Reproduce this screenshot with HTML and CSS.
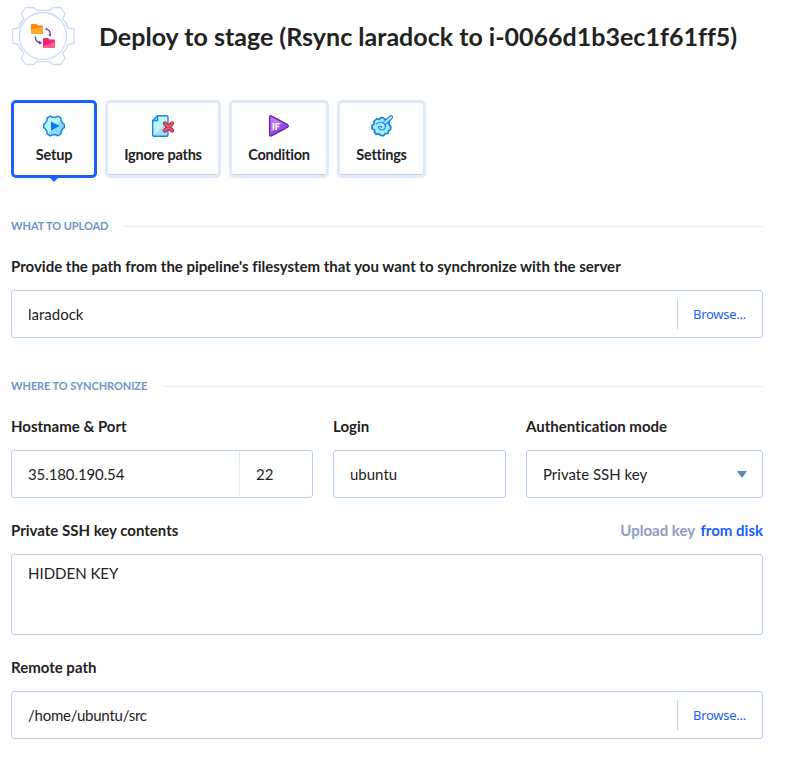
FILE: index.html
```html
<!DOCTYPE html>
<html lang="en">
<head>
<meta charset="utf-8">
<title>Deploy to stage</title>
<link rel="stylesheet" href="styles.css">
</head>
<body>
<main class="page">
  <header class="header">
    <svg class="header-icon" width="64" height="60" viewBox="11 6 64 60" fill="none">
      <path d="M25.5 7.5 33.5 7.5 37 10.5H50L53 7.5 61 7.5 65 14 62.5 19Q66.5 22.500 68 28L74 29V43L68 44.500Q66.500 49.500 62.500 53L65 58 61 64.500 53 64.500 50 61.500H37L33.500 64.500 25.500 64.500 21.500 58 24 53Q20 49.500 18.500 44.500L12.500 43V29L18.500 28Q20 22.500 24 19L21.500 14Z" stroke="#cbdcf7" stroke-width="1.300" stroke-linejoin="round"/>
      <circle cx="43" cy="36" r="23.500" stroke="#c8daf7" stroke-width="1.300"/>
      <path d="M31 25q0-1 1-1h4.500l1.500 1.500H42q1 0 1 1V33q0 1-1 1H32q-1 0-1-1Z" fill="#ff8500"/>
      <path d="M31 29.500 43 26.800V33q0 1-1 1H32q-1 0-1-1Z" fill="#ffab2e"/>
      <path d="M43 39q0-1 1-1h4l1.500 1.500H54q1 0 1 1V47q0 1-1 1H44q-1 0-1-1Z" fill="#fa246d"/>
      <path d="M43 46.500 55 41.500V47q0 1-1 1H44q-1 0-1-1Z" fill="#ff6091"/>
      <path d="M45.500 29.300q5 0 5 6M50.500 36l-1.700-1.500M45.500 29.300l1.600-1M35.500 36.500q-.5 5.500 5 6.300M39 41.200l2 1.600-2 1M35.500 36.500l-.7 1" stroke="#6939b7" stroke-width="1.300"/>
    </svg>
    <h1 class="title">Deploy to stage (Rsync laradock to i-0066d1b3ec1f61ff5)</h1>
  </header>

  <nav class="tabs">
    <a class="tab tab-setup active">
      <svg class="tab-icon" viewBox="0 0 22 22" fill="none">
        <path d="M7.300 1.200 9 2.200H13L14.700 1.200 18 3.200V5.300L19.800 8.400 21.300 9.300V12.700L19.800 13.600 18 16.700V18.800L14.700 20.800 13 19.800H9L7.300 20.800 4 18.800V16.700L2.200 13.600 .7 12.700V9.300L2.200 8.400 4 5.300V3.200Z" fill="#b8f4ff"/>
        <path d="M18 5.300 19.800 8.400 20.500 10V12.500L18 17V18L14.700 20 13 19H9L7 20 5 18.500Z" fill="#8ed7ff"/>
        <path d="M7.300 1.200 9 2.200H13L14.700 1.200 18 3.200V5.300L19.800 8.400 21.300 9.300V12.700L19.800 13.600 18 16.700V18.800L14.700 20.800 13 19.800H9L7.300 20.800 4 18.800V16.700L2.200 13.600 .7 12.700V9.300L2.200 8.400 4 5.300V3.200Z" stroke="#1784e8" stroke-width="1.500" stroke-linejoin="round"/>
        <path d="M8 6.500 16.500 11 8 15.500Z" fill="#087aec"/>
      </svg>
      <span>Setup</span>
    </a>
    <a class="tab tab-ignore">
      <svg class="tab-icon" viewBox="0 0 22 22" fill="none">
        <path d="M5.500.8H14.500Q16 .8 16 2.300V19.700Q16 21.200 14.500 21.200H2Q.7 21.200 .7 19.700V5.500Z" fill="#bbf6ff"/>
        <path d="M16 6V20.500H2Z" fill="#a2dcff"/>
        <path d="M5.500.8H14.500Q16 .8 16 2.300V19.700Q16 21.200 14.500 21.200H2Q.7 21.200 .7 19.700V5.500ZM5.500 1V5.500H1" stroke="#1784e8" stroke-width="1.400" stroke-linejoin="round"/>
        <path d="m13 8.500 7 7M20 8.500 13 15.500" stroke="#b52f4a" stroke-width="4.200" stroke-linecap="round"/>
        <path d="m13 8.500 7 7M20 8.500 13 15.500" stroke="#f05870" stroke-width="2" stroke-linecap="round"/>
      </svg>
      <span>Ignore paths</span>
    </a>
    <a class="tab tab-condition">
      <svg class="tab-icon" viewBox="0 0 22 22" fill="none">
        <path d="M1.700 2Q1.700.3 3.500 1.200L19.500 9.700Q21 11 19.500 12.200L3.500 20.800Q1.700 21.500 1.700 20Z" fill="#bf77fa"/>
        <path d="M20 11 3 20.500V17L15 7.500Z" fill="#9b4ce3"/>
        <path d="M1.700 2Q1.700.3 3.500 1.200L19.500 9.700Q21 11 19.500 12.200L3.500 20.800Q1.700 21.500 1.700 20Z" stroke="#5b20a8" stroke-width="1.400" stroke-linejoin="round"/>
        <text class="icon-text" x="4" y="14.500">IF</text>
      </svg>
      <span>Condition</span>
    </a>
    <a class="tab tab-settings">
      <svg class="tab-icon" viewBox="0 0 22 22" fill="none">
        <path d="M6 3.500 8 4.500 10 2.500 12.500 3 14 4.500 16 4 18.300 7 18 9.500 19.800 11.500 19.500 14.500 17.500 16 17 18.500 14 18.700 12.500 20.700 9.500 20.500 8 18.800 5 19.300 3.500 17V15L1 13.500 1.200 10.300 3 9 2.800 6.500Z" fill="#a4e9ff" stroke="#1680e6" stroke-width="1.700" stroke-linejoin="round"/>
        <path d="M14 8 20 2.200" stroke="#1680e6" stroke-width="4.200" stroke-linecap="round"/>
        <path d="M11 10.500 20 2.200" stroke="#b7f0ff" stroke-width="2" stroke-linecap="round"/>
        <path d="M5 9.500Q7 6.500 11 7.500L14 9Q15.500 14 11.500 15Q7.500 15 7.500 11.500H10.500V13" stroke="#268fea" stroke-width="1.200"/>
      </svg>
      <span>Settings</span>
    </a>
  </nav>

  <h2 class="section"><span>WHAT TO UPLOAD</span></h2>
  <div class="label">Provide the path from the pipeline's filesystem that you want to synchronize with the server</div>
  <div class="input"><span class="value">laradock</span><a class="browse">Browse...</a></div>

  <h2 class="section"><span>WHERE TO SYNCHRONIZE</span></h2>
  <div class="columns">
    <div>
      <div class="label">Hostname &amp; Port</div>
      <div class="input"><span class="value host">35.180.190.54</span><span class="port">22</span></div>
    </div>
    <div>
      <div class="label">Login</div>
      <div class="input"><span class="value">ubuntu</span></div>
    </div>
    <div>
      <div class="label">Authentication mode</div>
      <div class="input"><span class="value">Private SSH key</span><i class="caret"></i></div>
    </div>
  </div>

  <div class="label spaced"><span>Private SSH key contents</span><span class="upload">Upload key <a>from disk</a></span></div>
  <div class="input key">HIDDEN KEY</div>

  <div class="label spaced">Remote path</div>
  <div class="input"><span class="value path">/home/ubuntu/src</span><a class="browse">Browse...</a></div>
</main>
</body>
</html>
```
FILE: styles.css
```css
* { box-sizing: border-box; }
body {
  margin: 0;
  background: #fff;
  color: #222;
  font: 15px/20px Lato, "Liberation Sans", sans-serif;
  font-variant-ligatures: none;
}
.page { width: 763px; padding: 6px 0 0 11px; }
.header { display: flex; height: 60px; }
.header-icon { flex: none; }
.title {
  margin: 14px 0 0 24px;
  font-size: 25px;
  line-height: 32px;
  font-weight: 700;
  letter-spacing: 0.01px;
  white-space: nowrap;
}
.tabs { display: flex; gap: 8px; margin-top: 34px; }
.tab {
  position: relative;
  display: flex;
  flex-direction: column;
  align-items: center;
  height: 78px;
  padding-top: 12px;
  border: 3px solid #dfeafb;
  border-radius: 5px;
  box-shadow: inset 0 -1px 0 #c3cfdf;
  font-size: 14.5px;
  font-weight: 700;
  letter-spacing: -0.22px;
  white-space: nowrap;
}
.tab-icon { width: 22px; height: 22px; margin-bottom: 8px; }
.tab-setup { width: 86px; }
.tab-ignore { width: 116px; }
.tab-condition { width: 100px; }
.tab-settings { width: 89px; }
.active { border-color: #1a5fff; box-shadow: none; }
.active::after {
  content: "";
  position: absolute;
  top: 74px;
  left: 35px;
  border: 5px solid transparent;
  border-top-color: #1a5fff;
  border-bottom: 0;
}
.icon-text { font: 900 9px Lato, sans-serif; letter-spacing: 0; fill: #fff; }
.section {
  display: flex;
  align-items: center;
  gap: 16px;
  height: 16px;
  margin: 40px 0 22px;
  font-size: 11px;
  line-height: 16px;
  font-weight: 700;
  letter-spacing: -0.08px;
  color: #6f94c4;
}
.section::after { content: ""; flex: 1; height: 1px; background: #e4effc; }
.label {
  display: flex;
  justify-content: space-between;
  height: 20px;
  margin-bottom: 14px;
  font-weight: 700;
  white-space: nowrap;
}
.spaced { margin-top: 22px; }
.input {
  display: flex;
  align-items: center;
  height: 48px;
  padding-left: 16px;
  border: 1px solid #b9d0f6;
  border-radius: 3px;
}
.value { flex: 1; }
.host { letter-spacing: -0.1px; }
.path { letter-spacing: -0.23px; }
.browse {
  width: 85px;
  height: 30px;
  padding-left: 15px;
  border-left: 1px solid #b9d0f6;
  color: #1a5fff;
  font: 13px/31px "Noto Sans", sans-serif;
  letter-spacing: -0.27px;
}
.columns { display: grid; grid-template-columns: 302px 173px 237px; gap: 20px; }
.port {
  width: 73px;
  padding-left: 16px;
  border-left: 1px solid #e3ebfb;
  line-height: 46px;
}
.caret {
  margin-right: 15px;
  border: 5px solid transparent;
  border-top: 7px solid #5b86bb;
  border-bottom: 0;
}
.upload { color: #8b9dc3; }
.upload a { margin-left: 2px; color: #1a5fff; }
.key { height: 81px; align-items: flex-start; padding-top: 8px; }
```
